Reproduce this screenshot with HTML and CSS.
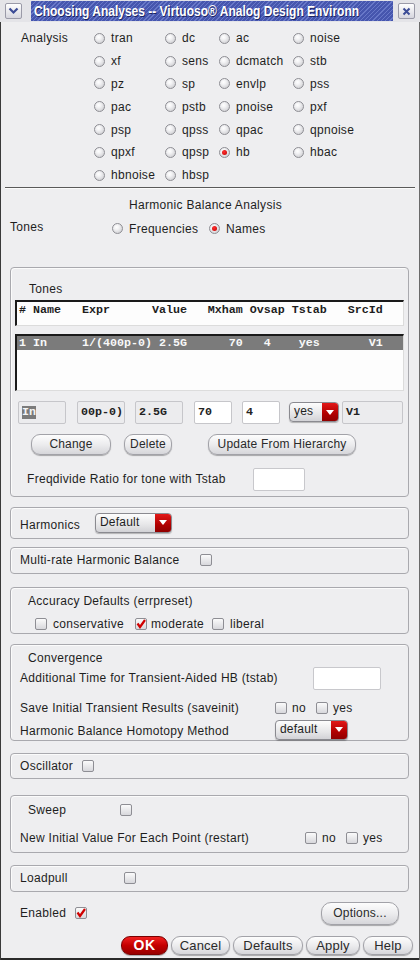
FILE: index.html
```html
<!DOCTYPE html>
<html>
<head>
<meta charset="utf-8">
<title>Choosing Analyses</title>
<link rel="stylesheet" href="styles.css">
</head>
<body>
<div class="window">
  <div class="titlebar">
    <div class="tb-side tb-left">
      <span class="tb-btn"><svg width="11" height="8" viewBox="0 0 11 8"><path d="M1.5 1.5 L5.5 5.5 L9.5 1.5" fill="none" stroke="#3c4c96" stroke-width="2.2"/></svg></span>
    </div>
    <div class="tb-title"><span class="tb-text">Choosing Analyses -- Virtuoso® Analog Design Environn</span></div>
    <div class="tb-side tb-right">
      <span class="tb-btn"><svg width="9" height="9" viewBox="0 0 9 9"><path d="M1.5 1.5 L7.5 7.5 M7.5 1.5 L1.5 7.5" fill="none" stroke="#3c4c96" stroke-width="2"/></svg></span>
    </div>
  </div>

  <div class="analysis">
    <div class="an-label">Analysis</div>
    <label class="radio"><span class="rb"></span>tran</label>
    <label class="radio"><span class="rb"></span>dc</label>
    <label class="radio"><span class="rb"></span>ac</label>
    <label class="radio"><span class="rb"></span>noise</label>
    <label class="radio"><span class="rb"></span>xf</label>
    <label class="radio"><span class="rb"></span>sens</label>
    <label class="radio"><span class="rb"></span>dcmatch</label>
    <label class="radio"><span class="rb"></span>stb</label>
    <label class="radio"><span class="rb"></span>pz</label>
    <label class="radio"><span class="rb"></span>sp</label>
    <label class="radio"><span class="rb"></span>envlp</label>
    <label class="radio"><span class="rb"></span>pss</label>
    <label class="radio"><span class="rb"></span>pac</label>
    <label class="radio"><span class="rb"></span>pstb</label>
    <label class="radio"><span class="rb"></span>pnoise</label>
    <label class="radio"><span class="rb"></span>pxf</label>
    <label class="radio"><span class="rb"></span>psp</label>
    <label class="radio"><span class="rb"></span>qpss</label>
    <label class="radio"><span class="rb"></span>qpac</label>
    <label class="radio"><span class="rb"></span>qpnoise</label>
    <label class="radio"><span class="rb"></span>qpxf</label>
    <label class="radio"><span class="rb"></span>qpsp</label>
    <label class="radio"><span class="rb on"></span>hb</label>
    <label class="radio"><span class="rb"></span>hbac</label>
    <label class="radio"><span class="rb"></span>hbnoise</label>
    <label class="radio"><span class="rb"></span>hbsp</label>
  </div>

  <div class="separator"></div>

  <div class="hb-title">Harmonic Balance Analysis</div>

  <div class="tones-row">
    <div class="tones-label">Tones</div>
    <label class="radio freq"><span class="rb"></span>Frequencies</label>
    <label class="radio"><span class="rb on"></span>Names</label>
  </div>

  <div class="group g-tones">
    <div class="g-title">Tones</div>
    <div class="tbl tbl-head">#&nbsp;Name&nbsp;&nbsp;&nbsp;Expr&nbsp;&nbsp;&nbsp;&nbsp;&nbsp;&nbsp;Value&nbsp;&nbsp;&nbsp;Mxham&nbsp;Ovsap&nbsp;Tstab&nbsp;&nbsp;&nbsp;SrcId</div>
    <div class="tbl tbl-rows">
      <div class="sel-row">1&nbsp;In&nbsp;&nbsp;&nbsp;&nbsp;&nbsp;1/(400p-0)&nbsp;2.5G&nbsp;&nbsp;&nbsp;&nbsp;&nbsp;&nbsp;70&nbsp;&nbsp;&nbsp;4&nbsp;&nbsp;&nbsp;&nbsp;yes&nbsp;&nbsp;&nbsp;&nbsp;&nbsp;&nbsp;&nbsp;V1</div>
    </div>
    <div class="fields">
      <div class="fld ro w48"><span class="hl">In</span></div>
      <div class="fld ro w48 m11">00p-0)</div>
      <div class="fld ro w48 m10">2.5G</div>
      <div class="fld ed w38 m11">70</div>
      <div class="fld ed w38 m10">4</div>
      <div class="select s-yes"><span class="val">yes</span><span class="arr"><svg width="8" height="5" viewBox="0 0 8 5"><path d="M0 0 H8 L4 5 Z" fill="#fff"/></svg></span></div>
      <div class="fld ro w61 m3">V1</div>
    </div>
    <div class="btn-row">
      <div class="btn b-change">Change</div>
      <div class="btn b-delete">Delete</div>
      <div class="btn b-update">Update From Hierarchy</div>
    </div>
    <div class="freq-row">
      <div class="freq-label">Freqdivide Ratio for tone with Tstab</div>
      <div class="input w52"></div>
    </div>
  </div>

  <div class="group g-harm row-group">
    <div class="lbl harm-label">Harmonics</div>
    <div class="select s-default"><span class="val">Default</span><span class="arr"><svg width="8" height="5" viewBox="0 0 8 5"><path d="M0 0 H8 L4 5 Z" fill="#fff"/></svg></span></div>
  </div>

  <div class="group g-multi row-group">
    <div class="lbl multi-label">Multi-rate Harmonic Balance</div>
    <span class="cb"></span>
  </div>

  <div class="group g-acc">
    <div class="g-title">Accuracy Defaults (errpreset)</div>
    <div class="acc-row">
      <label class="check a1"><span class="cb"></span>conservative</label>
      <label class="check a2"><span class="cb on"><svg width="12" height="12" viewBox="0 0 12 12"><path d="M2.5 5.5 L5 9 L10 2" fill="none" stroke="#d00000" stroke-width="2.2"/></svg></span>moderate</label>
      <label class="check"><span class="cb"></span>liberal</label>
    </div>
  </div>

  <div class="group g-conv">
    <div class="g-title">Convergence</div>
    <div class="crow c-add">
      <div class="clabel">Additional Time for Transient-Aided HB (tstab)</div>
      <div class="input w68 tstab"></div>
    </div>
    <div class="crow c-save">
      <div class="clabel">Save Initial Transient Results (saveinit)</div>
      <label class="check yn"><span class="cb"></span>no</label>
      <label class="check"><span class="cb"></span>yes</label>
    </div>
    <div class="crow c-homo">
      <div class="clabel">Harmonic Balance Homotopy Method</div>
      <div class="select s-homo"><span class="val">default</span><span class="arr"><svg width="8" height="5" viewBox="0 0 8 5"><path d="M0 0 H8 L4 5 Z" fill="#fff"/></svg></span></div>
    </div>
  </div>

  <div class="group g-osc row-group">
    <div class="lbl osc-label">Oscillator</div>
    <span class="cb"></span>
  </div>

  <div class="group g-sweep">
    <div class="sweep-row">
      <div class="sweep-label">Sweep</div>
      <span class="cb"></span>
    </div>
    <div class="crow c-restart">
      <div class="rlabel">New Initial Value For Each Point (restart)</div>
      <label class="check yn"><span class="cb"></span>no</label>
      <label class="check"><span class="cb"></span>yes</label>
    </div>
  </div>

  <div class="group g-load row-group">
    <div class="lbl load-label">Loadpull</div>
    <span class="cb"></span>
  </div>

  <div class="enabled-row">
    <div class="en-label">Enabled</div>
    <span class="cb on"><svg width="12" height="12" viewBox="0 0 12 12"><path d="M2.5 5.5 L5 9 L10 2" fill="none" stroke="#d00000" stroke-width="2.2"/></svg></span>
    <div class="btn b-options">Options...</div>
  </div>

  <div class="footer">
    <div class="btn fbtn ok">OK</div>
    <div class="btn fbtn b-cancel">Cancel</div>
    <div class="btn fbtn b-defaults">Defaults</div>
    <div class="btn fbtn b-apply">Apply</div>
    <div class="btn fbtn b-help">Help</div>
  </div>
</div>
</body>
</html>
```

FILE: styles.css
```css
html, body {
  margin: 0;
  padding: 0;
  background: #eeeef0;
}

body {
  font-family: "Liberation Sans", Arial, sans-serif;
  font-size: 12px;
  letter-spacing: 0.3px;
  color: #1e1e1e;
}

.window {
  width: 420px;
  height: 960px;
  box-sizing: border-box;
  background: #eeeef0;
  box-shadow: inset 1px 0 0 #3a3a3a, inset -1px 0 0 #6a6a6a, inset 0 -2px 0 #2a2a2a;
  display: flex;
  flex-direction: column;
  overflow: hidden;
}

/* ---------- title bar ---------- */
.titlebar {
  height: 22px;
  display: flex;
  flex-shrink: 0;
  background: #e4e4e8;
}

.tb-side {
  display: flex;
  align-items: flex-start;
  padding-top: 3px;
  box-sizing: border-box;
}

.tb-left {
  width: 31px;
  padding-left: 5px;
}

.tb-right {
  width: 27px;
  padding-left: 5px;
}

.tb-btn {
  width: 17px;
  height: 16px;
  box-sizing: border-box;
  border: 1px solid #9a9aa8;
  border-radius: 2px;
  background: linear-gradient(#ffffff, #d6d6de);
  display: flex;
  align-items: center;
  justify-content: center;
}

.tb-title {
  flex: 1;
  margin: 1px 0 1px 0;
  background-color: #4a5ab2;
  background-image: repeating-linear-gradient(-45deg, #4656ae 0px, #4656ae 2px, #6878c8 2px, #6878c8 3px);
  color: #ffffff;
  font-weight: bold;
  font-size: 15px;
  line-height: 20px;
  padding-left: 3px;
  white-space: nowrap;
  overflow: hidden;
  letter-spacing: 0;
  text-shadow: 1px 1px 0 #1c2460;
}

.tb-text {
  display: inline-block;
  transform: scaleX(0.8);
  transform-origin: 0 50%;
}

/* ---------- analysis radios ---------- */
.analysis {
  display: grid;
  grid-template-columns: 73px 71px 54px 74px 1fr;
  grid-auto-rows: 22.8px;
  padding: 5px 0 0 21px;
}

.an-label {
  grid-row: 1 / span 7;
  grid-column: 1;
  line-height: 22.8px;
}

.radio {
  display: flex;
  align-items: center;
  gap: 6px;
  white-space: nowrap;
}

.rb {
  width: 11px;
  height: 11px;
  box-sizing: border-box;
  border-radius: 50%;
  border: 1px solid #8e8e94;
  background: radial-gradient(circle at 40% 35%, #ffffff 0, #f2f2f4 30%, #c4c4c8 100%);
  position: relative;
  flex-shrink: 0;
}

.rb.on::after {
  content: "";
  position: absolute;
  left: 2px;
  top: 2px;
  width: 5px;
  height: 5px;
  border-radius: 50%;
  background: radial-gradient(circle at 40% 35%, #ff3030, #c00000);
}

.separator {
  height: 0;
  border-top: 1px solid #5a5a5a;
  border-bottom: 1px solid #fbfbfb;
  margin: 0 5px;
}

.hb-title {
  margin-top: 9px;
  line-height: 14px;
  text-align: center;
  padding-right: 9px;
}

.tones-row {
  display: flex;
  align-items: center;
  height: 16px;
  margin-top: 9px;
  padding-left: 10px;
}

.tones-label {
  width: 102px;
  position: relative;
  top: -2px;
}

.tones-row .freq {
  width: 97px;
}

/* ---------- groups ---------- */
.group {
  margin-left: 10px;
  width: 399px;
  box-sizing: border-box;
  border: 1px solid #a9a9ae;
  border-radius: 4px;
  box-shadow: inset 1px 1px 0 #fbfbfb;
  flex-shrink: 0;
}

.row-group {
  display: flex;
  align-items: center;
  padding-left: 9px;
}

.lbl {
  line-height: 14px;
  white-space: nowrap;
}

.g-title {
  line-height: 14px;
  padding-left: 17px;
}

/* tones group */
.g-tones {
  margin-top: 30px;
  height: 230px;
  padding: 14px 4px 0 4px;
}

.g-tones .g-title {
  padding-left: 14px;
}

.tbl {
  box-sizing: border-box;
  border-top: 2px solid #1a1a1a;
  border-left: 2px solid #1a1a1a;
  border-right: 1px solid #dcdcdc;
  border-bottom: 1px solid #dcdcdc;
  background: #fdfdfd;
  font-family: "Liberation Mono", "Courier New", monospace;
  font-weight: bold;
  font-size: 11.67px;
  letter-spacing: 0;
  line-height: 14px;
  white-space: nowrap;
}

.tbl-head {
  margin-top: 4px;
  height: 26px;
  padding: 1px 0 0 2px;
}

.tbl-rows {
  margin-top: 8px;
  height: 57px;
}

.sel-row {
  height: 14px;
  background: #7b7b7b;
  color: #f8f8f8;
  padding-left: 2px;
}

.fields {
  margin-top: 10px;
  height: 23px;
  display: flex;
  align-items: center;
  padding-left: 3px;
}

.fld {
  height: 23px;
  box-sizing: border-box;
  border: 1px solid #c6c6ca;
  border-radius: 2px;
  display: flex;
  align-items: center;
  padding-left: 3px;
  font-family: "Liberation Mono", "Courier New", monospace;
  font-weight: bold;
  font-size: 11.67px;
  letter-spacing: 0;
  color: #222;
  overflow: hidden;
  white-space: nowrap;
}

.fld.ro {
  background: #ececee;
}

.fld.ed {
  background: #ffffff;
}

.hl {
  background: #7b7b7b;
  color: #f4f4f4;
  line-height: 13px;
}

.w48 { width: 48px; }
.w38 { width: 38px; }
.w61 { width: 61px; }
.w52 { width: 52px; }
.w68 { width: 68px; }
.m3 { margin-left: 3px; }
.m10 { margin-left: 10px; }
.m11 { margin-left: 11px; }

.input {
  height: 23px;
  box-sizing: border-box;
  border: 1px solid #c8c8cc;
  border-radius: 2px;
  background: #ffffff;
}

/* selects */
.select {
  display: flex;
  height: 20px;
  box-sizing: border-box;
  border: 1px solid #8a8a90;
  border-radius: 4px;
  overflow: hidden;
  background: linear-gradient(#fdfdfd, #e6e6e8 60%, #d2d2d6);
  box-shadow: 0 1px 1px rgba(0,0,0,0.25);
  flex-shrink: 0;
}

.select .val {
  flex: 1;
  padding-left: 4px;
  line-height: 17px;
  letter-spacing: 0.2px;
}

.select .arr {
  width: 16px;
  background: linear-gradient(#e21818, #b00000 60%, #900000);
  display: flex;
  align-items: center;
  justify-content: center;
}

.s-yes {
  width: 50px;
  margin-left: 9px;
}

.s-default {
  width: 77px;
}

.s-homo {
  width: 73px;
}

/* buttons */
.btn {
  height: 21px;
  box-sizing: border-box;
  border: 1px solid #a2a2a8;
  border-radius: 9px;
  background: linear-gradient(#fdfdfd, #ececee 50%, #d6d6da);
  box-shadow: 0 1px 1px rgba(0,0,0,0.3);
  display: flex;
  align-items: center;
  justify-content: center;
  white-space: nowrap;
  color: #2a2a2a;
  letter-spacing: 0.2px;
}

.btn-row {
  display: flex;
  margin-top: 10px;
  padding-left: 16px;
}

.b-change { width: 80px; }
.b-delete { width: 48px; margin-left: 13px; }
.b-update { width: 148px; margin-left: 36px; }

.freq-row {
  display: flex;
  align-items: center;
  margin-top: 13px;
  padding-left: 12px;
}

.freq-label {
  width: 226px;
  white-space: nowrap;
}

/* checkboxes */
.cb {
  width: 12px;
  height: 12px;
  box-sizing: border-box;
  border: 1px solid #8e8e94;
  border-radius: 2px;
  background: linear-gradient(#fbfbfb, #d8d8dc);
  display: inline-flex;
  align-items: center;
  justify-content: center;
  flex-shrink: 0;
}

.cb svg {
  display: block;
  margin: -1px;
}

.check {
  display: flex;
  align-items: center;
  gap: 5px;
  white-space: nowrap;
}

.g-harm {
  margin-top: 10px;
  height: 32px;
}

.harm-label {
  width: 75px;
  position: relative;
  top: 2px;
}

.g-multi {
  margin-top: 8px;
  height: 27px;
}

.multi-label {
  width: 180px;
}

.g-acc {
  margin-top: 13px;
  height: 47px;
  padding-top: 6px;
}

.acc-row {
  display: flex;
  align-items: center;
  height: 16px;
  margin-top: 8px;
  padding-left: 24px;
}

.acc-row .check {
  gap: 6px;
}

.acc-row .a1 {
  width: 100px;
}

.acc-row .a2 {
  width: 77px;
  gap: 4px;
}

.g-conv {
  margin-top: 10px;
  height: 97px;
  padding-top: 6px;
}

.crow {
  display: flex;
  align-items: center;
  padding-left: 9px;
}

.clabel {
  width: 255px;
  white-space: nowrap;
}

.c-add {
  margin-top: 2px;
  height: 23px;
}

.tstab {
  margin-left: 38px;
}

.c-save {
  margin-top: 10px;
  height: 16px;
}

.check.yn {
  width: 41px;
}

.c-homo {
  margin-top: 4px;
  height: 20px;
}

.c-homo .clabel {
  position: relative;
  top: 1px;
}

.g-osc {
  margin-top: 12px;
  height: 26px;
}

.osc-label {
  width: 62px;
}

.g-sweep {
  margin-top: 16px;
  height: 58px;
  padding-top: 6px;
}

.sweep-row {
  display: flex;
  align-items: center;
  height: 16px;
  padding-left: 17px;
}

.sweep-label {
  width: 92px;
}

.c-restart {
  margin-top: 12px;
  height: 16px;
}

.rlabel {
  width: 285px;
  white-space: nowrap;
}

.g-load {
  margin-top: 12px;
  height: 27px;
}

.load-label {
  width: 104px;
}

.enabled-row {
  display: flex;
  align-items: center;
  margin-top: 10px;
  height: 23px;
  padding: 0 21px 0 20px;
}

.en-label {
  width: 55px;
}

.b-options {
  margin-left: auto;
  width: 78px;
  height: 23px;
  border-radius: 10px;
}

.footer {
  display: flex;
  justify-content: flex-end;
  gap: 3px;
  margin-top: 11px;
  padding-right: 7px;
}

.fbtn {
  height: 19px;
  font-size: 13px;
  border-radius: 9px;
}

.ok {
  width: 47px;
  background: linear-gradient(#f02020, #c40000 50%, #980000);
  border-color: #7a0000;
  color: #ffffff;
  font-weight: bold;
  font-size: 14px;
  letter-spacing: 0.5px;
}

.b-cancel { width: 59px; }
.b-defaults { width: 70px; }
.b-apply { width: 54px; }
.b-help { width: 50px; }
```
